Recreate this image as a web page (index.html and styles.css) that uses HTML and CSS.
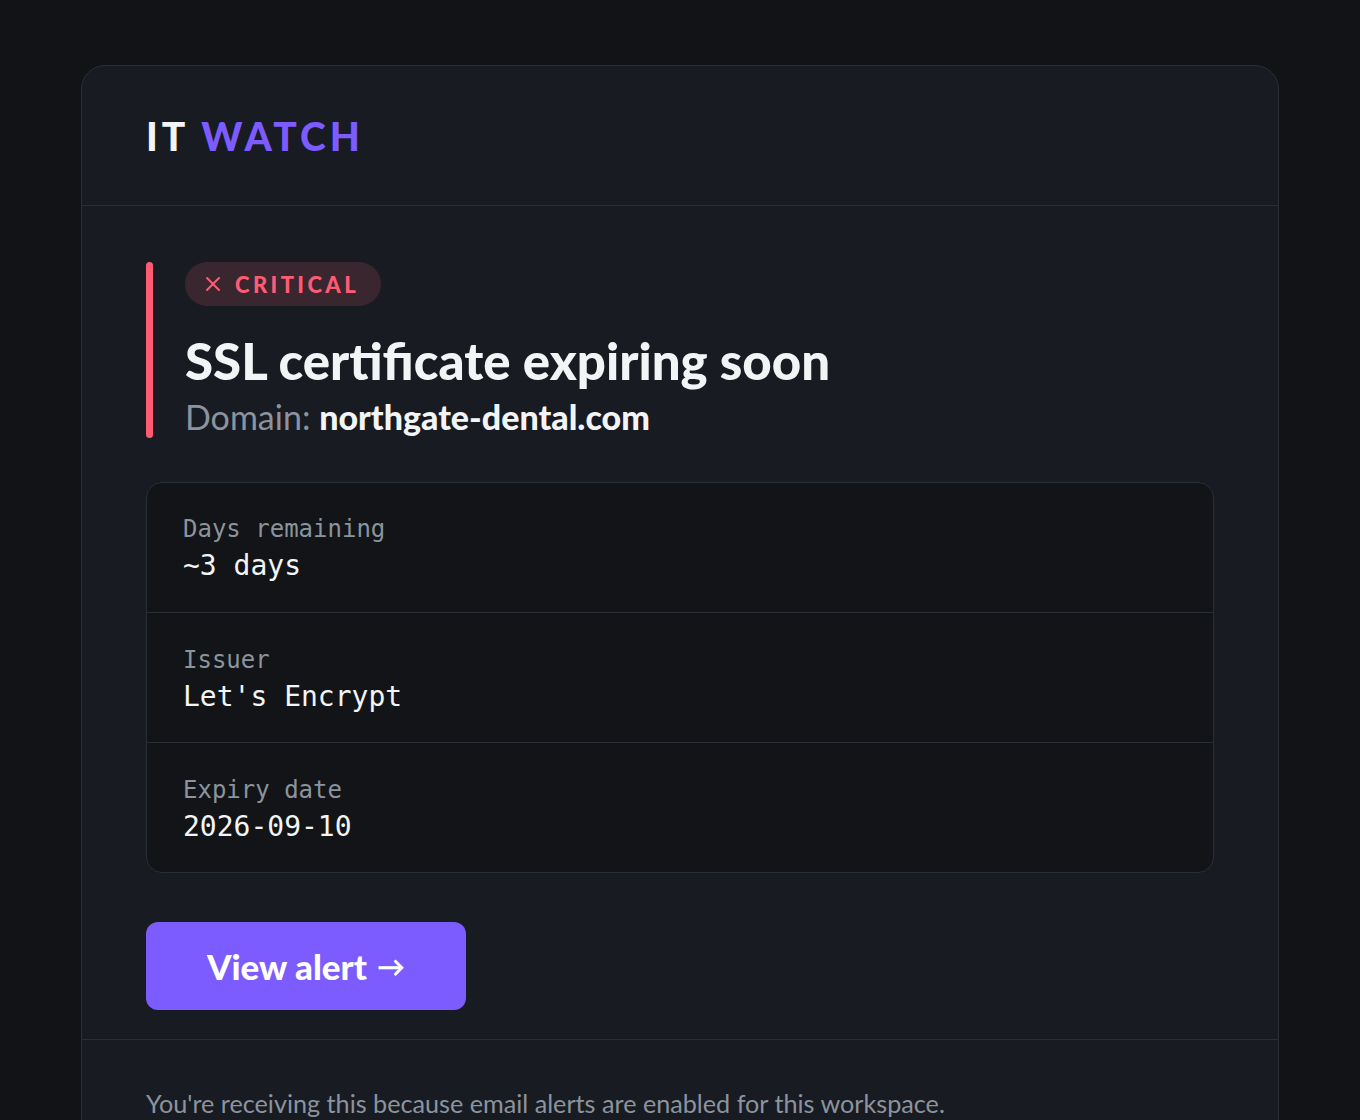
FILE: index.html
```html
<!DOCTYPE html>
<html>
<head>
<meta charset="utf-8">
<link rel="stylesheet" href="styles.css">
</head>
<body>
<div class="card">
  <header class="header">
    <div class="logo">IT <span class="accent">WATCH</span></div>
  </header>
  <main class="content">
    <div class="alert">
      <div class="bar"></div>
      <div class="alert-body">
        <div class="badge">
          <svg class="badge-x" width="16" height="16" viewBox="0 0 16 16"><path d="M2 2 L14 14 M14 2 L2 14" stroke="currentColor" stroke-width="2" stroke-linecap="round" fill="none"/></svg>
          <span>CRITICAL</span>
        </div>
        <h1 class="title">SSL certificate expiring soon</h1>
        <div class="domain"><span class="domain-label">Domain:</span> <strong>northgate-dental.com</strong></div>
      </div>
    </div>
    <div class="details">
      <div class="row">
        <div class="label">Days remaining</div>
        <div class="value">~3 days</div>
      </div>
      <div class="row">
        <div class="label">Issuer</div>
        <div class="value">Let's Encrypt</div>
      </div>
      <div class="row">
        <div class="label">Expiry date</div>
        <div class="value">2026-09-10</div>
      </div>
    </div>
    <a class="button" href="#">View alert <span class="arrow">→</span></a>
  </main>
  <footer class="footer">
    You're receiving this because email alerts are enabled for this workspace.
  </footer>
</div>
</body>
</html>
```

FILE: styles.css
```css
* { box-sizing: border-box; }
html, body { margin: 0; padding: 0; }
body {
  background: #111316;
  font-family: "Lato", "Liberation Sans", sans-serif;
  color: #f3f4f6;
  padding-top: 65px;
  height: 1120px;
  overflow: hidden;
}
.card {
  width: 1198px;
  margin: 0 auto;
  background: #181b22;
  border: 1px solid #2a2e36;
  border-radius: 24px;
}
.header {
  height: 140px;
  padding: 0 64px;
  display: flex;
  align-items: center;
  border-bottom: 1px solid #2a2e36;
}
.logo {
  font-size: 39px;
  font-weight: 900;
  letter-spacing: 4px;
  color: #f3f4f6;
}
.accent { color: #7c5cff; }
.content {
  padding: 56px 64px 29px;
}
.alert {
  display: flex;
  gap: 32px;
}
.bar {
  width: 7px;
  background: #ff5c74;
  border-radius: 4px;
  flex: none;
}
.alert-body {
  display: flex;
  flex-direction: column;
  align-items: flex-start;
}
.badge {
  display: flex;
  align-items: center;
  gap: 14px;
  height: 44px;
  padding: 0 22px 0 20px;
  border-radius: 22px;
  background: #3a262e;
  color: #ff5c74;
  font-size: 22px;
  font-weight: 900;
  letter-spacing: 3.4px;
}
.badge-x { flex: none; }
.title {
  margin: 20px 0 0;
  font-size: 51px;
  line-height: 70px;
  font-weight: 900;
  color: #f3f4f6;
}
.domain {
  font-size: 34px;
  line-height: 42px;
  color: #f3f4f6;
}
.domain-label { color: #8b949e; }
.domain strong { font-weight: 900; }
.details {
  margin-top: 44px;
  background: #121417;
  border: 1px solid #2a2e36;
  border-radius: 16px;
  font-family: "DejaVu Sans Mono", "Liberation Mono", monospace;
}
.row {
  height: 130px;
  padding: 31px 36px 0;
  border-top: 1px solid #2a2e36;
}
.row:first-child { border-top: none; height: 129px; padding-top: 30px; }
.label {
  font-size: 24px;
  line-height: 33px;
  color: #8b949e;
}
.value {
  font-size: 28px;
  line-height: 40px;
  color: #f3f4f6;
}
.button {
  display: flex;
  align-items: center;
  justify-content: center;
  gap: 10px;
  width: 320px;
  height: 88px;
  margin-top: 49px;
  background: #7c5cff;
  color: #ffffff;
  border-radius: 12px;
  font-size: 35px;
  font-weight: 900;
  text-decoration: none;
  word-spacing: 0;
}
.arrow {
  font-size: 28px;
  font-weight: 700;
}
.footer {
  border-top: 1px solid #2a2e36;
  padding: 46px 64px 40px;
  font-size: 25.2px;
  line-height: 34px;
  color: #8b949e;
}
```
